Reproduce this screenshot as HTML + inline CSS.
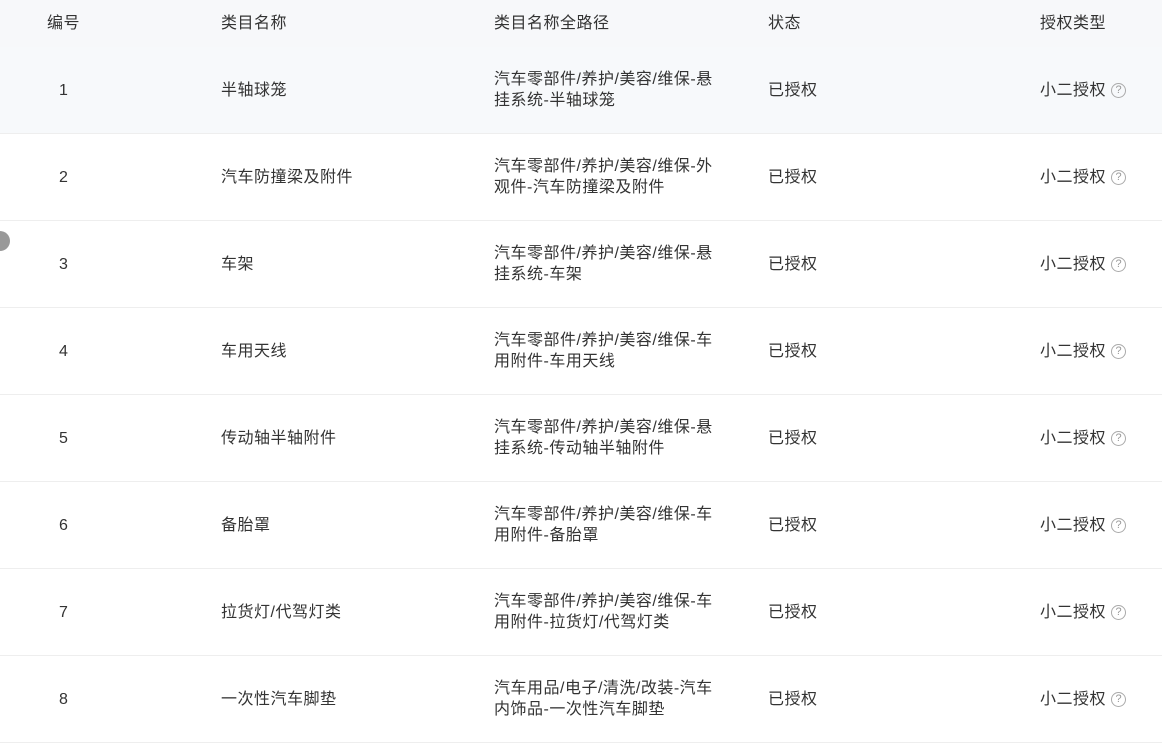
<!DOCTYPE html><html><head><meta charset="utf-8"><style>
body{margin:0;width:1162px;height:723px;overflow:hidden;background:#fff;font-family:"Liberation Sans","Noto Sans CJK SC",sans-serif;font-size:16px;letter-spacing:0.5px;color:#333;position:relative}
.hd{position:absolute;top:0;left:0;width:1162px;height:47px;background:#f7f8fa}
.row{position:absolute;left:0;width:1162px;height:86px;border-bottom:1px solid #eee}
.c{position:absolute;top:0;height:100%;display:flex;align-items:center;line-height:21px;white-space:nowrap}
.q{display:inline-block;width:13px;height:13px;border:1px solid #aaa;border-radius:50%;font-size:11px;line-height:13px;text-align:center;color:#999;margin-left:5px;letter-spacing:0}
</style></head><body>
<div class="hd">
<div class="c" style="left:47px">编号</div><div class="c" style="left:221px">类目名称</div><div class="c" style="left:494px">类目名称全路径</div><div class="c" style="left:768px">状态</div><div class="c" style="left:1040px">授权类型</div>
</div>
<div id="rows"></div>
<div style="position:absolute;left:-10px;top:231px;width:20px;height:20px;border-radius:50%;background:#999"></div>
<script>
var d=[["1","半轴球笼","汽车零部件/养护/美容/维保-悬<br>挂系统-半轴球笼"],["2","汽车防撞梁及附件","汽车零部件/养护/美容/维保-外<br>观件-汽车防撞梁及附件"],["3","车架","汽车零部件/养护/美容/维保-悬<br>挂系统-车架"],["4","车用天线","汽车零部件/养护/美容/维保-车<br>用附件-车用天线"],["5","传动轴半轴附件","汽车零部件/养护/美容/维保-悬<br>挂系统-传动轴半轴附件"],["6","备胎罩","汽车零部件/养护/美容/维保-车<br>用附件-备胎罩"],["7","拉货灯/代驾灯类","汽车零部件/养护/美容/维保-车<br>用附件-拉货灯/代驾灯类"],["8","一次性汽车脚垫","汽车用品/电子/清洗/改装-汽车<br>内饰品-一次性汽车脚垫"]];
var h="";d.forEach(function(r,i){h+='<div class="row" style="top:'+(47+i*87)+'px;'+(i==0?'background:#f7f9fb':'')+'"><div class="c" style="left:59px">'+r[0]+'</div><div class="c" style="left:221px">'+r[1]+'</div><div class="c" style="left:494px">'+r[2]+'</div><div class="c" style="left:768px">已授权</div><div class="c" style="left:1040px">小二授权<span class="q">?</span></div></div>'});
document.getElementById("rows").innerHTML=h;
</script>
</body></html>
